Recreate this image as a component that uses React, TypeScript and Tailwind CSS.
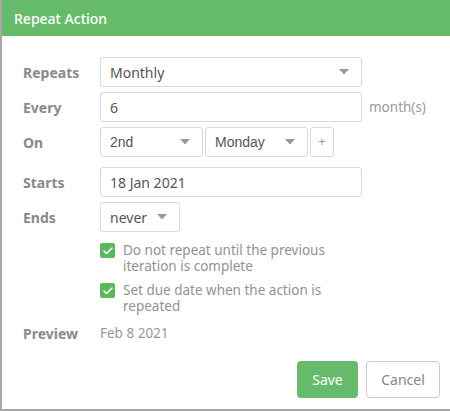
import { Check } from "lucide-react";

function Caret() {
  return (
    <svg width="10" height="6" viewBox="0 0 10 6" className="shrink-0">
      <path d="M0 0h10L5 5.5z" fill="#999" />
    </svg>
  );
}

function SelectBox({ value, width, font = "" }: { value: string; width: string; font?: string }) {
  return (
    <div
      className={`flex h-[30px] ${width} items-center justify-between rounded-[3px] border border-[#d9d9d9] bg-white pl-[9px] pr-[12px] text-[14px] text-[#555] ${font}`}
    >
      <span>{value}</span>
      <Caret />
    </div>
  );
}

function Row({ label, children, className = "" }: { label: string; children: React.ReactNode; className?: string }) {
  return (
    <div className={`flex items-center ${className}`}>
      <div className="w-[77px] text-[14px] font-bold text-[#8a8a8a]">{label}</div>
      {children}
    </div>
  );
}

function CheckItem({ text }: { text: React.ReactNode }) {
  return (
    <div className="flex items-start gap-[8px] pl-[77px]">
      <div className="mt-[3px] flex h-[15px] w-[15px] shrink-0 items-center justify-center rounded-[2px] bg-[#5cb85c]">
        <Check size={12} strokeWidth={3} color="white" />
      </div>
      <div className="w-[225px] pt-[2px] text-[13.5px] leading-[16px] text-[#929292]">{text}</div>
    </div>
  );
}

export default function App() {
  return (
    <div className="h-[411px] w-[450px] bg-[#a8a8a8] font-['Noto_Sans',sans-serif]">
      <div className="ml-[2px] flex h-[409px] flex-col bg-white">
        <div className="flex h-[36px] items-center bg-[#65bb6a] pl-[12px] text-[14px] font-medium text-white">
          Repeat Action
        </div>
        <div className="flex flex-col pl-[21px] pt-[21px]">
          <Row label="Repeats">
            <SelectBox value="Monthly" width="w-[262px]" />
          </Row>
          <Row label="Every" className="mt-[5px]">
            <div className="flex h-[30px] w-[262px] items-center rounded-[3px] border border-[#d9d9d9] pl-[9px] text-[14px] text-[#555]">
              6
            </div>
            <span className="ml-[7px] text-[13.5px] text-[#999]">month(s)</span>
          </Row>
          <Row label="On" className="mt-[5px]">
            <div className="flex items-center gap-[2px]">
              <SelectBox value="2nd" width="w-[103px]" font="font-['Liberation_Sans',sans-serif]" />
              <SelectBox value="Monday" width="w-[103px]" font="font-['Liberation_Sans',sans-serif]" />
              <div className="flex h-[30px] w-[24px] items-center justify-center rounded-[3px] border border-[#d9d9d9] text-[12px] text-[#999]">
                +
              </div>
            </div>
          </Row>
          <Row label="Starts" className="mt-[10px]">
            <div className="flex h-[30px] w-[262px] items-center rounded-[3px] border border-[#d9d9d9] pl-[9px] text-[14px] text-[#555]">
              18 Jan 2021
            </div>
          </Row>
          <Row label="Ends" className="mt-[5px]">
            <SelectBox value="never" width="w-[80px]" />
          </Row>
          <div className="mt-[8px] flex flex-col gap-[6px]">
            <CheckItem text="Do not repeat until the previous iteration is complete" />
            <CheckItem text="Set due date when the action is repeated" />
          </div>
          <Row label="Preview" className="mt-[9px]">
            <span className="text-[13.5px] text-[#999]">Feb 8 2021</span>
          </Row>
        </div>
        <div className="mt-auto mb-[11px] flex justify-end gap-[8px] pr-[10px]">
          <button className="h-[37px] w-[61px] rounded-[4px] bg-[#65bb6a] text-[14px] text-white">Save</button>
          <button className="h-[37px] w-[74px] rounded-[4px] border border-[#ccc] bg-white text-[14px] text-[#888]">
            Cancel
          </button>
        </div>
      </div>
    </div>
  );
}
